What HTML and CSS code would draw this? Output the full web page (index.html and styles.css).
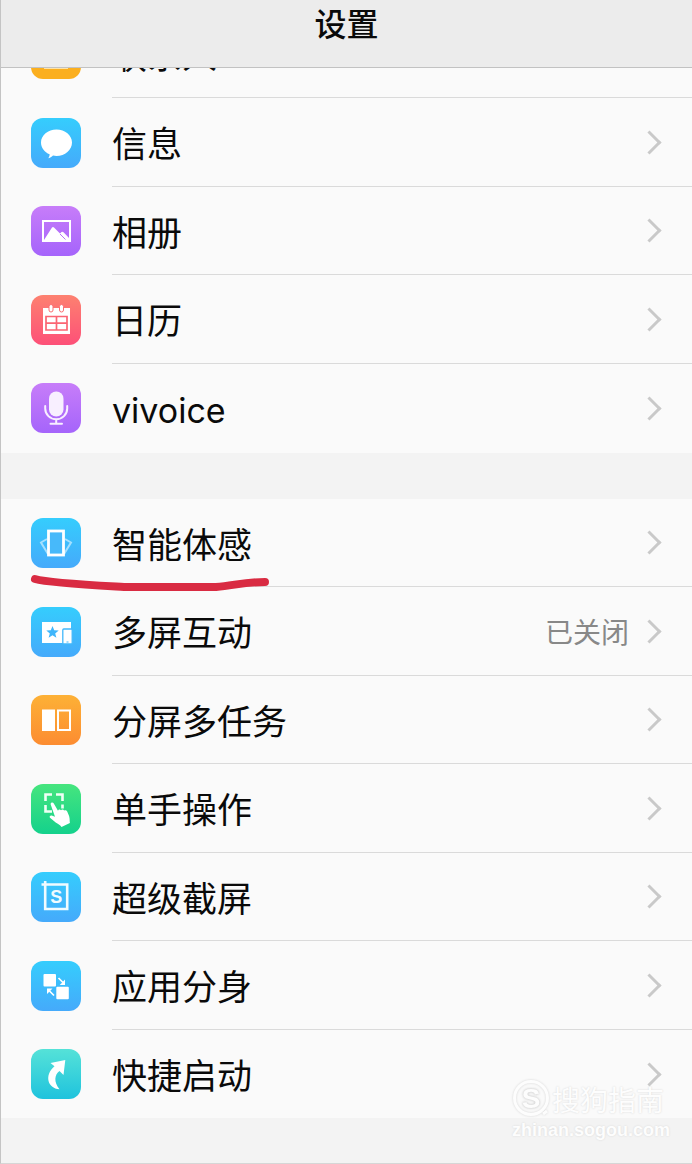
FILE: index.html
```html
<!DOCTYPE html>
<html lang="zh-CN">
<head>
    <meta charset="UTF-8">
    <meta name="viewport" content="width=device-width, initial-scale=1">
    <title>设置</title>
    <link rel="stylesheet" href="styles.css">
</head>
<body>
    <header class="title-bar">
        <h1>设置</h1>
    </header>

    <main>
        <!-- Apps -->
        <nav class="group scrolled">
            <a class="row" href="#contacts">
                <span class="icon amber">
                    <svg viewBox="0 0 50 50"><circle cx="25" cy="18" r="7" fill="#fff"/><path d="M13 40c0-8 5-12 12-12s12 4 12 12z" fill="#fde3a8"/></svg>
                </span>
                <span class="cell"><span class="label">联系人</span><span class="chevron"></span></span>
            </a>
            <a class="row" href="#messages">
                <span class="icon blue">
                    <svg viewBox="0 0 50 50"><path d="M25.500 11.500C34 11.500 41 17.200 41 24.500S34 38 25.500 38c-1.200 0-2.400-.1-3.500-.4-1 1.100-2.300 2-4.700 2.700.9-1.400 1.400-2.800 1.300-4C13.500 34.300 10 29.700 10 24.500c0-7.300 7-13 15.500-13z" fill="#fff"/></svg>
                </span>
                <span class="cell"><span class="label">信息</span><span class="chevron"></span></span>
            </a>
            <a class="row" href="#album">
                <span class="icon purple">
                    <svg viewBox="0 0 50 50">
                        <rect x="12" y="15" width="27" height="20" fill="none" stroke="#fff" stroke-width="2"/>
                        <path d="M13 34l8-12.500q1-1 2 0l6 6 1.500-1.500q1.200-.8 2 .2L38 32v3H13z" fill="#fff"/>
                        <path d="M29 28l5.500 5.500" stroke="#b573f7" stroke-width="1"/>
                    </svg>
                </span>
                <span class="cell"><span class="label">相册</span><span class="chevron"></span></span>
            </a>
            <a class="row" href="#calendar">
                <span class="icon coral">
                    <svg viewBox="0 0 50 50">
                        <rect x="12" y="13" width="27" height="26" fill="#fff"/>
                        <g fill="#fff" stroke="#fb7072" stroke-width="1">
                            <rect x="18" y="9.500" width="4" height="7.500" rx="2"/>
                            <rect x="28.500" y="9.500" width="4" height="7.500" rx="2"/>
                        </g>
                        <path d="M15 21.500h21V35H15zM25.500 21.500V35M15 28.200h21" fill="none" stroke="#fb6573" stroke-width="1.700"/>
                    </svg>
                </span>
                <span class="cell"><span class="label">日历</span><span class="chevron"></span></span>
            </a>
            <a class="row" href="#vivoice">
                <span class="icon purple">
                    <svg viewBox="0 0 50 50">
                        <rect x="18" y="8.500" width="14.500" height="25" rx="7.200" fill="#f8efff"/>
                        <path d="M14.200 23v2.500a11 10.800 0 0 0 22 0V23M25.200 36.500v4M19.500 40.700h11.500" fill="none" stroke="#f8efff" stroke-width="2" stroke-linecap="round"/>
                    </svg>
                </span>
                <span class="cell"><span class="label latin">vivoice</span><span class="chevron"></span></span>
            </a>
        </nav>

        <!-- Smart features -->
        <nav class="group">
            <a class="row" href="#motion">
                <span class="icon blue">
                    <svg viewBox="0 0 50 50">
                        <path d="M16 21l-6 3.500L17 36M34 21l6 3.500L33 36" fill="none" stroke="#a4e0ff" stroke-width="2"/>
                        <rect x="17.500" y="13" width="15" height="24" fill="#47b9fa" stroke="#fff" stroke-width="2.800"/>
                    </svg>
                </span>
                <span class="cell"><span class="label">智能体感</span><span class="chevron"></span></span>
                <svg class="marker" viewBox="0 0 240 22"><path d="M6 7C20 11 60 13 95 15h92c20-2 30-5 49-5" /></svg>
            </a>
            <a class="row" href="#multi-screen">
                <span class="icon blue">
                    <svg viewBox="0 0 50 50">
                        <rect x="11" y="15" width="29" height="21" fill="#fff"/>
                        <path d="M21.500 19l1.700 4.200 4.500.3-3.500 2.900 1.200 4.400-3.900-2.500-3.900 2.500 1.200-4.400-3.500-2.900 4.500-.3z" fill="#3fb6fb"/>
                        <rect x="31.800" y="22" width="9.400" height="15" rx="1" fill="#fff" stroke="#42b8fb" stroke-width="1.300"/>
                        <path d="M35.500 35h2" stroke="#42b8fb"/>
                    </svg>
                </span>
                <span class="cell"><span class="label">多屏互动</span><span class="value">已关闭</span><span class="chevron"></span></span>
            </a>
            <a class="row" href="#split-screen">
                <span class="icon orange">
                    <svg viewBox="0 0 50 50">
                        <rect x="11" y="14.500" width="13" height="21.500" fill="#fff"/>
                        <rect x="27" y="15.500" width="12" height="19.500" fill="none" stroke="#fff" stroke-width="2"/>
                    </svg>
                </span>
                <span class="cell"><span class="label">分屏多任务</span><span class="chevron"></span></span>
            </a>
            <a class="row" href="#one-hand">
                <span class="icon green">
                    <svg viewBox="0 0 50 50">
                        <path d="M14.500 17v-6.500H21M25 10.500h6.500V17M14.500 21v6.500H21M31.500 20.500v4" fill="none" stroke="#effff5" stroke-width="2.600"/>
                        <path d="M20.300 18.800c1-.7 1.900-.2 2.500.8l4.200 7.200c.5-1.400 2-1.500 3-.6.900-1 2.500-.7 3.200.3 1.200-.6 2.400 0 3 1l1.900 4.500c.8 2.700.4 4.500.8 7L30.500 43c-1.500-2.300-3.500-2.800-5.800-4.500L19 33.800c-1-1.200.2-2.500 1.700-2.200l3.300 1.200-4.300-12.200c-.2-.8 0-1.400.6-1.800z" fill="#fff"/>
                    </svg>
                </span>
                <span class="cell"><span class="label">单手操作</span><span class="chevron"></span></span>
            </a>
            <a class="row" href="#screenshot">
                <span class="icon blue">
                    <svg viewBox="0 0 50 50">
                        <path d="M14.200 9v28h22V12.500H10.500" fill="none" stroke="#f0fbff" stroke-width="2.600"/>
                        <text class="icon-letter" x="25.300" y="31.300" text-anchor="middle">S</text>
                    </svg>
                </span>
                <span class="cell"><span class="label">超级截屏</span><span class="chevron"></span></span>
            </a>
            <a class="row" href="#app-clone">
                <span class="icon blue">
                    <svg viewBox="0 0 50 50">
                        <rect x="12.500" y="13" width="12.500" height="12.500" rx="1" fill="#fff"/>
                        <rect x="25.300" y="25.800" width="12.500" height="12.500" rx="1" fill="#fff"/>
                        <path d="M27.500 17l4.500 4.500M23 34.500L18.500 30" stroke="#fff" stroke-width="1.700"/>
                        <path d="M34 24v-5.500L28.800 24zM16 27.500h5.500L16 33z" fill="#fff"/>
                    </svg>
                </span>
                <span class="cell"><span class="label">应用分身</span><span class="chevron"></span></span>
            </a>
            <a class="row" href="#quick-launch">
                <span class="icon teal">
                    <svg viewBox="0 0 50 50"><path d="M34.300 11L32.500 26l-4-4c-5 3.500-6 11 0 18.300C16.500 39.500 13 26 23.500 17.300L19.500 14z" fill="#fff"/></svg>
                </span>
                <span class="cell"><span class="label">快捷启动</span><span class="chevron"></span></span>
            </a>
        </nav>
    </main>

    <div class="watermark">
        <div class="brand">
            <svg viewBox="0 0 40 40">
                <circle cx="19" cy="19" r="16.500"/>
                <path d="M31 35l4-3"/>
                <text x="19" y="29" text-anchor="middle">S</text>
            </svg>
            <span>搜狗指南</span>
        </div>
        <div class="site">zhinan.sogou.com</div>
    </div>
</body>
</html>
```

FILE: styles.css
```css
* {
    box-sizing: border-box;
}
body {
    margin: 0;
    min-height: 100vh;
    position: relative;
    font-family: "Noto Sans CJK SC", sans-serif;
    color: #0a0a0a;
    background: #f3f3f3;
    border-left: 1px solid #c4c4c4;
    border-bottom: 1px solid #d6d6d6;
}
.title-bar {
    position: sticky;
    top: 0;
    z-index: 2;
    height: 68px;
    background: #ececec;
    border-bottom: 1px solid #c2c2c2;
}
.title-bar h1 {
    margin: 0;
    font-size: 32px;
    line-height: 44px;
    font-weight: 500;
    text-align: center;
}
.group {
    background: #fafafa;
    margin-bottom: 46px;
}
.group:last-child {
    margin-bottom: 0;
}
/* first row sits partly under the title bar */
.scrolled {
    margin-top: -58px;
    padding-bottom: 1px;
}
.row {
    display: flex;
    height: 88px;
    padding-left: 30px;
    align-items: center;
    color: inherit;
    text-decoration: none;
    position: relative;
}
.row:nth-child(even) {
    height: 89px;
}
.icon {
    width: 50px;
    height: 50px;
    margin-right: 31px;
    border-radius: 12px;
    flex: none;
}
.icon svg {
    display: block;
    width: 100%;
    height: 100%;
}
.icon-letter {
    font: bold 18px "Liberation Sans", sans-serif;
    fill: #f0fbff;
}
.amber { background: #fbaf1f; }
.blue { background: linear-gradient(#35cdfd, #45aafb); }
.purple { background: linear-gradient(#c77df9, #a564fb); }
.coral { background: linear-gradient(#fd8170, #fd5078); }
.orange { background: linear-gradient(#fdb136, #fc8c31); }
.green { background: linear-gradient(#46e57e, #14d18c); }
.teal { background: linear-gradient(#55e2d8, #1fc3dd); }

.cell {
    flex: 1;
    display: flex;
    align-items: center;
    align-self: stretch;
    padding-right: 34px;
    border-bottom: 1px solid #dadada;
}
.row:last-child .cell {
    border-bottom: none;
}
.label {
    flex: 1;
    font-size: 35px;
    line-height: 48px;
}
.latin {
    padding-top: 6px;
    font-family: Inter, "Noto Sans CJK SC", sans-serif;
    font-size: 34px;
}
.value {
    margin-right: 12px;
    font-size: 28px;
    color: #888;
}
.chevron {
    width: 17px;
    height: 17px;
    border-top: 3px solid #c9c9c9;
    border-right: 3px solid #c9c9c9;
    transform: rotate(45deg);
}
.marker {
    position: absolute;
    left: 28px;
    bottom: -7px;
    width: 240px;
    height: 22px;
    z-index: 1;
}
.marker path {
    fill: none;
    stroke: #d92b42;
    stroke-width: 8;
    stroke-linecap: round;
    stroke-linejoin: round;
}

.watermark {
    position: absolute;
    right: 22px;
    bottom: 22px;
    z-index: 3;
    color: #fdfdfd;
    text-shadow: 0 0 2px #d5d5d5;
    pointer-events: none;
}
.brand {
    display: flex;
    align-items: center;
    font-size: 28px;
    line-height: 40px;
}
.brand svg {
    width: 40px;
    height: 40px;
    filter: drop-shadow(0 0 1px #d5d5d5);
}
.brand circle,
.brand path {
    fill: none;
    stroke: #fdfdfd;
    stroke-width: 3;
}
.brand text {
    font: bold 28px "Liberation Sans", sans-serif;
    fill: #fdfdfd;
}
.site {
    font: bold 18px/22px "Liberation Sans", sans-serif;
}
```
